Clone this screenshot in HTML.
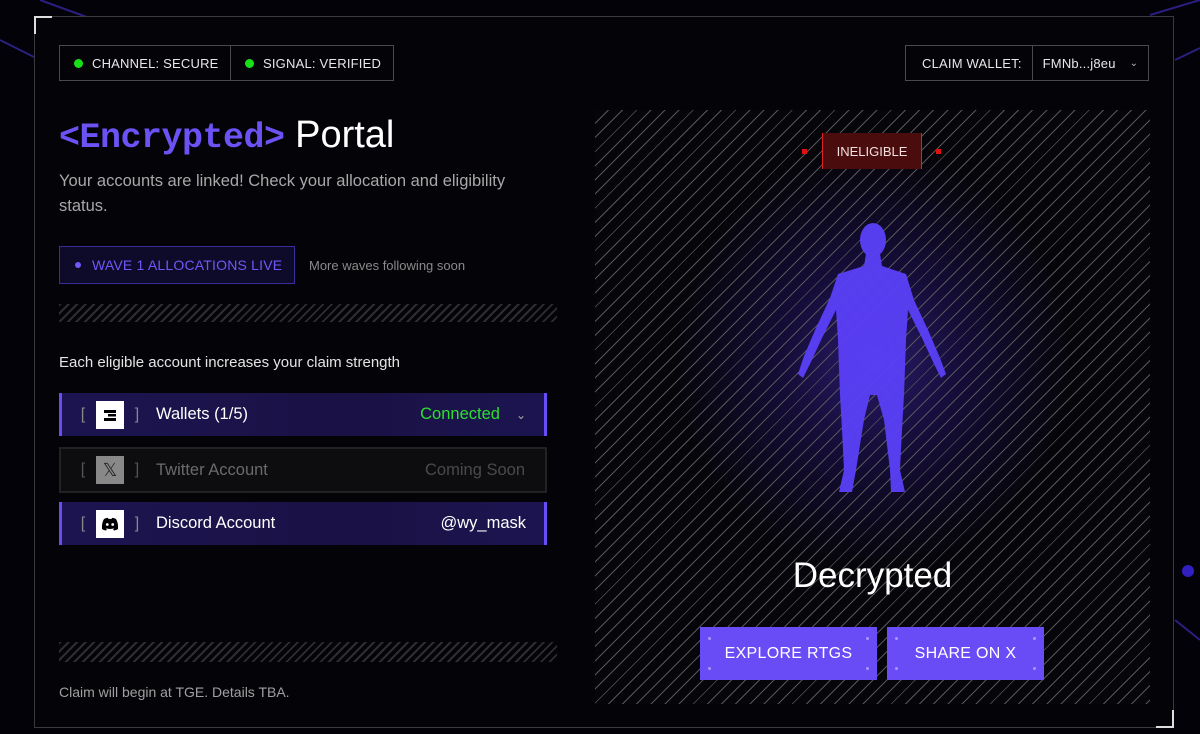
<!DOCTYPE html>
<html><head><meta charset="utf-8"><style>
*{box-sizing:border-box;margin:0;padding:0}
body{width:1200px;height:734px;overflow:hidden;background:#030208;font-family:"Liberation Sans",sans-serif;position:relative;color:#fff}
.abs{position:absolute}
.frame{left:34px;top:16px;width:1140px;height:712px;border:1px solid #3a3a3e;background:#040307}
.pill{border:1px solid #4a4a4e;height:36px;display:flex;align-items:center;font-size:13px;letter-spacing:.2px;color:#e8e8e8}
.dot{width:9px;height:9px;border-radius:50%;background:#18e018;display:inline-block;margin:0 9px 0 14px}
.hatch{background:repeating-linear-gradient(135deg,#2e2e32 0 2px,transparent 2px 6px)}
.row{left:59px;width:488px;display:flex;align-items:center;font-size:16px}
.row .br{color:#888;font-size:16px;width:14px;text-align:center}
.ico{width:28px;height:28px;background:#fff;margin:0 6px;display:flex;align-items:center;justify-content:center}
.btn{background:#6a4cf7;height:53px;display:flex;align-items:center;justify-content:center;font-size:16px;letter-spacing:.3px}
.btn i{position:absolute;width:3px;height:3px;background:#a898ff;border-radius:50%}
</style></head><body>
<svg class="abs" style="left:0;top:0" width="1200" height="734">
<line x1="40" y1="0" x2="150" y2="40" stroke="#2a1f80" stroke-width="2"/>
<line x1="0" y1="40" x2="40" y2="60" stroke="#2a1f80" stroke-width="2"/>
<line x1="1150" y1="15" x2="1200" y2="0" stroke="#2a1f80" stroke-width="2"/>
<line x1="1175" y1="60" x2="1200" y2="48" stroke="#2a1f80" stroke-width="2"/>
<line x1="1175" y1="620" x2="1200" y2="640" stroke="#2a1f80" stroke-width="2"/>
<circle cx="1188" cy="571" r="6" fill="#3020c0"/>
</svg>
<div class="abs frame"></div>
<div class="abs" style="left:34px;top:16px;width:18px;height:18px;border-left:2px solid #ddd;border-top:2px solid #ddd"></div>
<div class="abs" style="left:1156px;top:710px;width:18px;height:18px;border-right:2px solid #ddd;border-bottom:2px solid #ddd"></div>

<div class="abs pill" style="left:59px;top:45px;width:172px"><span class="dot"></span>CHANNEL: SECURE</div>
<div class="abs pill" style="left:231px;top:45px;width:163px;border-left:none"><span class="dot"></span>SIGNAL: VERIFIED</div>

<div class="abs pill" style="left:905px;top:45px;width:244px"><span style="padding:0 10px 0 16px;border-right:1px solid #4a4a4e;height:100%;display:flex;align-items:center">CLAIM WALLET:</span><span style="padding-left:10px">FMNb...j8eu</span><span style="margin-left:14px;font-size:10px;color:#bbb">&#8964;</span></div>

<div class="abs" style="left:59px;top:114px;font-size:38px;white-space:nowrap"><span style="font-family:'Liberation Mono',monospace;color:#6b52f5;font-size:35px;letter-spacing:-0.5px;font-weight:bold">&lt;Encrypted&gt;</span> <span style="color:#fff">Portal</span></div>
<div class="abs" style="left:59px;top:169px;width:470px;font-size:16.5px;line-height:25px;color:#a8a8a8">Your accounts are linked! Check your allocation and eligibility status.</div>

<div class="abs" style="left:59px;top:246px;width:236px;height:38px;border:1px solid #3a2c9a;background:#0e0a2a;display:flex;align-items:center;font-size:14px;color:#7058f8;letter-spacing:.2px"><span style="width:6px;height:6px;border-radius:50%;background:#7058f8;margin:0 11px 0 15px"></span>WAVE 1 ALLOCATIONS LIVE</div>
<div class="abs" style="left:309px;top:258px;font-size:13px;color:#8a8a8a">More waves following soon</div>

<div class="abs hatch" style="left:59px;top:304px;width:498px;height:18px"></div>
<div class="abs" style="left:59px;top:354px;font-size:15px;color:#e4e4e4">Each eligible account increases your claim strength</div>

<div class="abs row" style="top:393px;height:43px;background:linear-gradient(90deg,#1c1450,#1a1245 60%,#1c1450);border-left:3px solid #6a4cf7;border-right:3px solid #6a4cf7;padding-left:14px">
<span class="br">[</span><div class="ico"><svg width="16" height="14"><rect x="2" y="2" width="12" height="3" fill="#000"/><rect x="6" y="6" width="8" height="2.5" fill="#000"/><rect x="2" y="10" width="12" height="3" fill="#000"/></svg></div><span class="br">]</span>
<span style="margin-left:12px;font-size:16.5px">Wallets (1/5)</span><span style="margin-left:auto;color:#2ee02e;font-size:16.5px">Connected</span><span style="margin:0 18px 0 16px;color:#aaa;font-size:12px">&#8964;</span></div>

<div class="abs row" style="top:447px;height:46px;background:#0d0d10;border:2px solid #222;padding-left:15px;color:#6a6a6a">
<span class="br" style="color:#555">[</span><div class="ico" style="background:#888"><span style="color:#222;font-size:18px">𝕏</span></div><span class="br" style="color:#555">]</span>
<span style="margin-left:12px;font-size:16.5px">Twitter Account</span><span style="margin-left:auto;margin-right:20px;color:#4a4a4a;font-size:16.5px">Coming Soon</span></div>

<div class="abs row" style="top:502px;height:43px;background:linear-gradient(90deg,#1c1450,#1a1245 60%,#1c1450);border-left:3px solid #6a4cf7;border-right:3px solid #6a4cf7;padding-left:14px">
<span class="br">[</span><div class="ico"><svg width="18" height="14" viewBox="0 0 18 14"><path d="M3 2 Q6 0.5 7 1 L7.5 2 Q9 1.7 10.5 2 L11 1 Q12 0.5 15 2 Q17.5 6 17 12 Q15 13.5 13 13.5 L12 12 Q13 11.5 13.5 11 Q9 13 4.5 11 Q5 11.5 6 12 L5 13.5 Q3 13.5 1 12 Q0.5 6 3 2Z" fill="#000"/><circle cx="6.3" cy="7.5" r="1.4" fill="#fff"/><circle cx="11.7" cy="7.5" r="1.4" fill="#fff"/></svg></div><span class="br">]</span>
<span style="margin-left:12px;font-size:16.5px">Discord Account</span><span style="margin-left:auto;margin-right:18px;font-size:16.5px">@wy_mask</span></div>

<div class="abs hatch" style="left:59px;top:642px;width:498px;height:20px"></div>
<div class="abs" style="left:59px;top:684px;font-size:14px;color:#a0a0a0">Claim will begin at TGE. Details TBA.</div>

<div class="abs" style="left:595px;top:110px;width:555px;height:594px;background:radial-gradient(ellipse 200px 210px at 278px 250px,#2a1a6a 0%,#150d38 45%,transparent 100%),#060509;overflow:hidden">
<div style="position:absolute;inset:0;background:repeating-linear-gradient(135deg,transparent 0 9px,#55555a 9px 10px)"></div>
</div>
<svg class="abs" style="left:0;top:0" width="1200" height="734">
<g fill="#5a40f8" opacity=".95">
<ellipse cx="873" cy="240" rx="13" ry="17"/>
<path d="M866 254 L880 254 L882 266 L906 274 L914 300 L928 330 L940 358 L946 374 L941 378 L934 364 L922 338 L908 310 L906 340 L904 395 L902 430 L900 470 L905 492 L891 492 L890 470 L884 420 L877 395 L870 395 L864 420 L856 470 L852 492 L839 492 L844 470 L842 430 L840 395 L838 340 L836 310 L822 338 L810 364 L803 378 L798 374 L804 356 L816 328 L830 298 L838 274 L864 266Z"/>
</g>
</svg>

<div class="abs" style="left:802px;top:149px;width:5px;height:5px;background:#e01010"></div>
<div class="abs" style="left:936px;top:149px;width:5px;height:5px;background:#e01010"></div>
<div class="abs" style="left:822px;top:133px;width:100px;height:36px;background:#4a0c0c;border-left:1px solid #e02020;border-right:1px solid #e02020;display:flex;align-items:center;justify-content:center;font-size:13px;color:#f0e0e0">INELIGIBLE</div>

<div class="abs" style="left:595px;top:556px;width:555px;text-align:center;font-size:35px;color:#fff">Decrypted</div>
<div class="abs btn" style="left:700px;top:627px;width:177px"><i style="left:8px;top:10px"></i><i style="right:8px;top:10px"></i><i style="left:8px;bottom:10px"></i><i style="right:8px;bottom:10px"></i>EXPLORE RTGS</div>
<div class="abs btn" style="left:887px;top:627px;width:157px"><i style="left:8px;top:10px"></i><i style="right:8px;top:10px"></i><i style="left:8px;bottom:10px"></i><i style="right:8px;bottom:10px"></i>SHARE ON X</div>
</body></html>
